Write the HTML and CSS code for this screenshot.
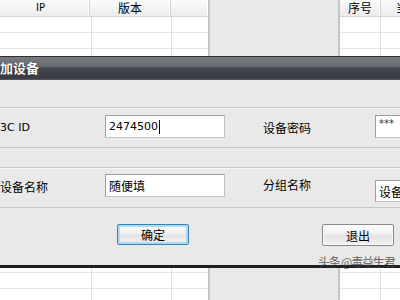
FILE: index.html
```html
<!DOCTYPE html>
<html>
<head>
<meta charset="utf-8">
<link rel="stylesheet" href="styles.css">
</head>
<body>
<div class="screen">
  <div class="tbl left">
    <div class="thead">
      <div class="th c1">IP</div>
      <div class="th c2">版本</div>
      <div class="th c3"></div>
    </div>
    <div class="tbody">
      <div class="td c1"></div>
      <div class="td c2"></div>
      <div class="td c3"></div>
    </div>
  </div>
  <div class="panel"></div>
  <div class="tbl right">
    <div class="thead">
      <div class="th r1">序号</div>
      <div class="th r2">当</div>
    </div>
    <div class="tbody">
      <div class="td r1"></div>
      <div class="td r2"></div>
    </div>
  </div>
</div>

<div class="dialog">
  <div class="titlebar">加设备</div>
  <div class="body">
    <div class="group g1">
      <div class="lbl en">3C ID</div>
      <div class="input"><span>2474500</span><span class="caret"></span></div>
      <div class="lbl l2">设备密码</div>
      <div class="input pw">***</div>
    </div>
    <div class="group g2">
      <div class="lbl">设备名称</div>
      <div class="input">随便填</div>
      <div class="lbl l2 up">分组名称</div>
      <div class="input combo">设备</div>
    </div>
    <div class="buttons">
      <button class="btn ok">确定</button>
      <button class="btn cancel">退出</button>
    </div>
  </div>
</div>

<div class="watermark">头条 @毒益生君</div>
</body>
</html>
```

FILE: styles.css
```css
html, body {
  margin: 0;
  padding: 0;
  width: 400px;
  height: 300px;
  overflow: hidden;
  font-family: "Noto Sans CJK SC", "DejaVu Sans", sans-serif;
  font-size: 12px;
  color: #000;
  background: #e8e8e8;
}

.screen {
  display: flex;
  width: 400px;
  height: 300px;
}

.tbl {
  display: flex;
  flex-direction: column;
  background: #fff;
}

.tbl.left {
  width: 208px;
  flex-shrink: 0;
  border-right: 2px solid #c4c4c4;
}

.tbl.right {
  flex: 1;
  min-width: 0;
  overflow: hidden;
  border-left: 2px solid #c4c4c4;
}

.panel {
  width: 128px;
  flex-shrink: 0;
  background: #e9e9e9;
}

.thead {
  display: flex;
  height: 16px;
  background: linear-gradient(#fbfbfb, #ececec);
  border-bottom: 1px solid #d8d8d8;
}

.th {
  display: flex;
  align-items: center;
  justify-content: center;
  font-size: 12px;
  line-height: 16px;
  white-space: nowrap;
  border-right: 1px solid #d4d4d4;
  box-shadow: inset -1px 0 0 #fff;
}

.th.c1 { width: 90px; font-family: "DejaVu Sans", sans-serif; font-size: 10px; padding-right: 8px; box-sizing: border-box; }
.th.c2 { width: 80px; }
.th.c3 { flex: 1; border-right: none; }

.th.r1 { width: 40px; flex-shrink: 0; }
.th.r2 { flex: 1; border-right: none; justify-content: flex-start; padding-left: 15px; }

.tbody {
  flex: 1;
  display: flex;
  background: repeating-linear-gradient(#fff 0, #fff 15px, #e4e4e4 15px, #e4e4e4 16px);
}

.td {
  border-right: 1px solid #e2e2e2;
}

.td.c1 { width: 91px; }
.td.c2 { width: 79px; }
.td.c3 { flex: 1; border-right: none; }
.td.r1 { width: 40px; flex-shrink: 0; }
.td.r2 { flex: 1; border-right: none; }

.dialog {
  position: absolute;
  top: 56px;
  left: 0;
  width: 400px;
  height: 212px;
  display: flex;
  flex-direction: column;
  background: #e9e9e9;
  border-bottom: 3px solid #1f1f1f;
  box-sizing: border-box;
  overflow: hidden;
}

.titlebar {
  height: 24px;
  box-sizing: border-box;
  border-top: 1px solid #2c2e33;
  background: linear-gradient(#777a7f 0, #686b70 42%, #45484f 48%, #373a41 92%, #5a5d63 100%);
  color: #fff;
  font-weight: bold;
  font-size: 13px;
  line-height: 22px;
  text-shadow: 0 0 1px #000;
}

.body {
  flex: 1;
  display: flex;
  flex-direction: column;
  padding-top: 27px;
}

.group {
  display: grid;
  grid-template-columns: 105px 120px 150px 60px;
  align-items: start;
  border-top: 1px solid #c8c8c8;
  border-bottom: 1px solid #c8c8c8;
  box-shadow: inset 0 1px 0 #f7f7f7;
}

.g1 {
  height: 41px;
  padding-top: 7px;
  box-sizing: border-box;
}

.g2 {
  margin-top: 19px;
  height: 41px;
  padding-top: 6px;
  box-sizing: border-box;
}

.lbl {
  font-size: 12px;
  line-height: 24px;
  margin-top: 1px;
  white-space: nowrap;
}

.lbl.en {
  font-family: "DejaVu Sans", sans-serif;
  font-size: 11px;
}

.lbl.l2 {
  padding-left: 38px;
}

.lbl.up {
  margin-top: -1px;
}

.input {
  height: 23px;
  box-sizing: border-box;
  background: #fff;
  border: 1px solid #9e9e9e;
  border-right-color: #c2c2c2;
  border-bottom-color: #c2c2c2;
  padding-left: 3px;
  font-size: 12px;
  line-height: 21px;
  display: flex;
  align-items: center;
  white-space: nowrap;
  overflow: hidden;
}

.input span:first-child {
  font-family: "DejaVu Sans", sans-serif;
  font-size: 11px;
}

.caret {
  display: inline-block;
  width: 1px;
  height: 14px;
  background: #000;
  margin-left: 1px;
}

.input.pw {
  font-family: "DejaVu Sans", sans-serif;
  font-size: 10px;
  color: #333;
  align-items: flex-start;
  padding-top: 2px;
  line-height: 12px;
}

.input.combo {
  margin-top: 6px;
  height: 22px;
  width: 25px;
  border-right: none;
}

.buttons {
  display: flex;
  padding-left: 117px;
  padding-top: 16px;
}

.btn {
  font-family: "Noto Sans CJK SC", sans-serif;
  font-size: 12px;
  width: 72px;
  height: 21px;
  padding: 0;
  line-height: 19px;
  border-radius: 2px;
  color: #000;
  background: linear-gradient(#fdfdfd 0, #f0f0f0 45%, #e3e3e3 55%, #f2f2f2 100%);
  border: 1px solid #8a8a8a;
}

.btn.ok {
  border-color: #3c7fb1;
  box-shadow: inset 0 0 0 2px #a9dcf5;
}

.btn.cancel {
  margin-left: 133px;
  height: 22px;
  box-shadow: inset 0 0 0 1px #fbfbfb;
}

.watermark {
  position: absolute;
  left: 318px;
  top: 253px;
  font-size: 12px;
  white-space: nowrap;
  color: rgba(60, 60, 60, 0.8);
  letter-spacing: -1.2px;
}
```
